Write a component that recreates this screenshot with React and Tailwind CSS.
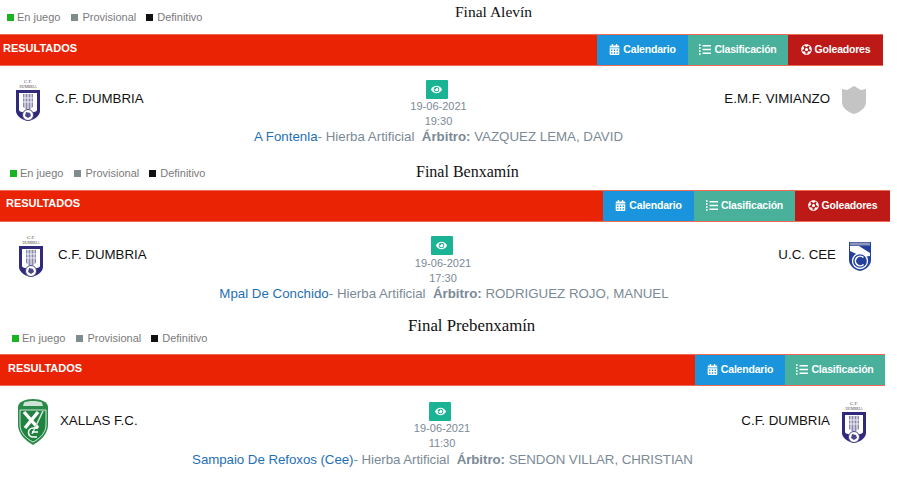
import React from 'react';
import { FaCalendarAlt, FaEye, FaFutbol } from 'react-icons/fa';

const ListIcon = () => (
  <svg width="12" height="11" viewBox="0 0 12 11" fill="currentColor">
    <path d="M0 0h1.6v2H0zM0 3h1.6v2H0zM0 6h1.6v2H0zM0 9h1.6v2H0z" opacity="0.85" />
    <path d="M3.5 1h8.5v1.5H3.5zM3.5 4.7h8.5v1.5H3.5zM3.5 8.4h8.5v1.5H3.5z" />
  </svg>
);

const Legend = ({ className }) => (
  <div className={`flex items-center text-[11px] text-[#7a7a7a] ${className}`}>
    <span className="w-[7px] h-[7px] bg-[#17b51f] mr-[3px]" />
    <span className="mr-[11px]">En juego</span>
    <span className="w-[7px] h-[7px] bg-[#7f8c8d] mr-[4px]" />
    <span className="mr-[10px]">Provisional</span>
    <span className="w-[7px] h-[7px] bg-[#111111] mr-[4px]" />
    <span>Definitivo</span>
  </div>
);

const DumbriaLogo = () => (
  <svg width="26" height="44" viewBox="0 0 26 44" className="mt-[2px]">
    <text x="13" y="5" textAnchor="middle" fontSize="5" fontFamily="Liberation Serif, serif" fill="#555">C.F.</text>
    <text x="13" y="10" textAnchor="middle" fontSize="3.6" fontFamily="Liberation Serif, serif" fill="#444">DUMBRIA</text>
    <path d="M1 12h24v21c0 5-6 9-12 10C7 42 1 38 1 33z" fill="#2f2a7c" />
    <path d="M4 15h18v17c0 1-2 2-3 2l-6 1-6-1c-1 0-3-1-3-2z" fill="#fff" />
    <path d="M8 16h10v13l-5 3-5-3z" fill="#8a88ad" />
    <path d="M10 16v14M13 16v15M16 16v14" stroke="#fff" strokeWidth="1" />
    <path d="M8 20h10M8 24h10" stroke="#fff" strokeWidth="0.8" />
    <circle cx="13" cy="37" r="5.5" fill="#fff" stroke="#4a4687" />
    <path d="M11 34l4 1 1 3-3 2-3-2z" fill="#4a4687" />
  </svg>
);

const GreyShield = () => (
  <svg width="26" height="28" viewBox="0 0 26 28" className="mt-[1px]">
    <path d="M1 3l5 1 7-4 7 4 5-1v13c0 6-6 10-12 12C7 26 1 22 1 16z" fill="#c4c4c4" />
  </svg>
);

const CeeLogo = () => (
  <svg width="24" height="31" viewBox="0 0 24 31" className="mt-[4px]">
    <path d="M1 1h22v18c0 6-6 10-11 11C7 29 1 25 1 19z" fill="#23409c" />
    <path d="M2 1.5h20v3H2z" fill="#8d95b8" />
    <path d="M2 5h9l11 7v3l-7 1-13-6z" fill="#fff" />
    <circle cx="12" cy="20" r="7.5" fill="#23409c" stroke="#fff" strokeWidth="1.3" />
    <path d="M15.5 16.5a4.8 4.8 0 1 0 0 7" fill="none" stroke="#fff" strokeWidth="1.6" />
  </svg>
);

const XallasLogo = () => (
  <svg width="32" height="48" viewBox="0 0 32 48" className="mt-[2px]">
    <path d="M1 9C1 4 8 1 16 1s15 3 15 8v18c0 9-8 16-15 20C9 43 1 36 1 27z" fill="#2a8a48" />
    <path d="M3 12h26v15c0 8-7 14-13 17C10 41 3 35 3 27z" fill="#1f8240" stroke="#fff" strokeWidth="0.8" />
    <path d="M7 4.5c4-2 14-2 18 0l1 3.5H6z" fill="#cfe3d4" />
    <path d="M7 14l14 16M21 14L8 30" stroke="#fff" strokeWidth="3.4" />
    <path d="M26 13L15 36" stroke="#cfe3d4" strokeWidth="1.6" />
    <path d="M21 30h-5a4 4 0 0 0 0 9h4M15 34h6" fill="none" stroke="#fff" strokeWidth="1.6" />
  </svg>
);

const Match = ({ title, titleClass, legendClass, widthClass, headClass, resultClass, bars, rowClass, sideClass, centerClass, buttonClass, lineClass, home, away, date, time, venue, surface, referee }) => (
  <section className={widthClass}>
    <div className={`relative flex items-center ${headClass}`}>
      <Legend className={legendClass} />
      <h2 className={`font-['Liberation_Serif',serif] text-[#111] leading-[18px] ${titleClass}`}>{title}</h2>
    </div>
    <div className="flex h-[32px] bg-[#ea2304] border-y border-[#ee6a55] text-white font-bold">
      <span className={`flex-1 flex items-center text-[11px] ${resultClass}`}>RESULTADOS</span>
      {bars.map((b) => (
        <span key={b.label} className={`flex items-center justify-center gap-[3px] pb-[1px] text-[10.5px] tracking-[-0.2px] ${b.className}`}>
          {b.icon}
          {b.label}
        </span>
      ))}
    </div>
    <div className={`grid grid-cols-[1fr_auto_1fr] ${rowClass}`}>
      <div className={`flex items-center ${sideClass}`}>
        {home.logo}
        <span className={`text-[13.3px] text-[#111] ${home.gap}`}>{home.name}</span>
      </div>
      <div className={`flex flex-col items-center text-[11px] leading-[15px] text-[#7b8a96] ${centerClass}`}>
        <span className={`flex items-center justify-center w-[22px] h-[19px] bg-[#1ab394] text-white rounded-[1px] text-[11px] ${buttonClass}`}>
          <FaEye />
        </span>
        <span>{date}</span>
        <span>{time}</span>
      </div>
      <div className={`flex items-center justify-end ${sideClass}`}>
        <span className={`text-[13.3px] text-[#111] ${away.gap}`}>{away.name}</span>
        {away.logo}
      </div>
    </div>
    <p className={`text-center text-[13.3px] leading-[15px] text-[#7b8a96] whitespace-nowrap ${lineClass}`}>
      <span className="text-[#1f6fb5]">{venue}</span>- {surface}&nbsp; <b>Árbitro:</b> {referee}
    </p>
  </section>
);

const calendar = <FaCalendarAlt className="text-[11px]" />;
const scorers = <FaFutbol className="text-[11px]" />;
const blueBar = 'w-[91px] bg-[#1a95dd]';
const tealBar = 'w-[100px] bg-[#48b09b]';
const redBar = 'w-[95px] bg-[#bd1a17]';

export default function App() {
  return (
    <div className="w-[897px] h-[481px] overflow-hidden bg-white font-['Liberation_Sans',Arial,sans-serif]">
      <Match
        title="Final Alevín"
        widthClass="w-[883px]"
        headClass="h-[34px]"
        legendClass="ml-[7px]"
        titleClass="absolute left-[455px] top-[3px] text-[15.5px]"
        resultClass="pl-[3px] pb-[4px]"
        rowClass="pl-[15px] pr-[16px]"
        sideClass="pt-[3px]"
        centerClass="pt-[14px] pr-[5px]"
        buttonClass="mr-[4px]"
        lineClass="pr-[6px]"
        bars={[
          { label: 'Calendario', icon: calendar, className: blueBar },
          { label: 'Clasificación', icon: <ListIcon />, className: tealBar },
          { label: 'Goleadores', icon: scorers, className: redBar },
        ]}
        home={{ name: 'C.F. DUMBRIA', logo: <DumbriaLogo />, gap: 'ml-[14px]' }}
        away={{ name: 'E.M.F. VIMIANZO', logo: <GreyShield />, gap: 'mr-[11px]' }}
        date="19-06-2021"
        time="19:30"
        venue="A Fontenla"
        surface="Hierba Artificial"
        referee="VAZQUEZ LEMA, DAVID"
      />
      <div className="mt-[9px]">
        <Match
          title="Final Benxamín"
          widthClass="w-[890px]"
          headClass="h-[37px]"
          legendClass="ml-[10px] mt-[4px]"
          titleClass="absolute left-[416px] top-[10px] text-[16px]"
          resultClass="pl-[6px] pb-[6px]"
          rowClass="pl-[18px] pr-[18px]"
          sideClass="pt-[1px]"
          centerClass="pt-[14px] pr-[4px]"
          buttonClass="mb-[1px] mr-[3px]"
          lineClass="pr-[2px]"
          bars={[
            { label: 'Calendario', icon: calendar, className: blueBar },
            { label: 'Clasificación', icon: <ListIcon />, className: 'w-[101px] bg-[#48b09b]' },
            { label: 'Goleadores', icon: scorers, className: redBar },
          ]}
          home={{ name: 'C.F. DUMBRIA', logo: <DumbriaLogo />, gap: 'ml-[14px]' }}
          away={{ name: 'U.C. CEE', logo: <CeeLogo />, gap: 'mr-[12px]' }}
          date="19-06-2021"
          time="17:30"
          venue="Mpal De Conchido"
          surface="Hierba Artificial"
          referee="RODRIGUEZ ROJO, MANUEL"
        />
      </div>
      <div className="mt-[8px]">
        <Match
          title="Final Prebenxamín"
          widthClass="w-[885px]"
          headClass="h-[45px]"
          legendClass="ml-[12px] mt-[14px]"
          titleClass="absolute left-[408px] top-[8px] text-[16.8px]"
          resultClass="pl-[8px] pb-[4px]"
          rowClass="pl-[17px] pr-[18px]"
          sideClass="pt-[4px]"
          centerClass="pt-[16px] pb-[1px]"
          buttonClass="mr-[4px]"
          lineClass="tracking-[-0.05px]"
          bars={[
            { label: 'Calendario', icon: calendar, className: 'w-[90px] bg-[#1a95dd]' },
            { label: 'Clasificación', icon: <ListIcon />, className: tealBar },
          ]}
          home={{ name: 'XALLAS F.C.', logo: <XallasLogo />, gap: 'ml-[11px]' }}
          away={{ name: 'C.F. DUMBRIA', logo: <DumbriaLogo />, gap: 'mr-[11px]' }}
          date="19-06-2021"
          time="11:30"
          venue="Sampaio De Refoxos (Cee)"
          surface="Hierba Artificial"
          referee="SENDON VILLAR, CHRISTIAN"
        />
      </div>
    </div>
  );
}
